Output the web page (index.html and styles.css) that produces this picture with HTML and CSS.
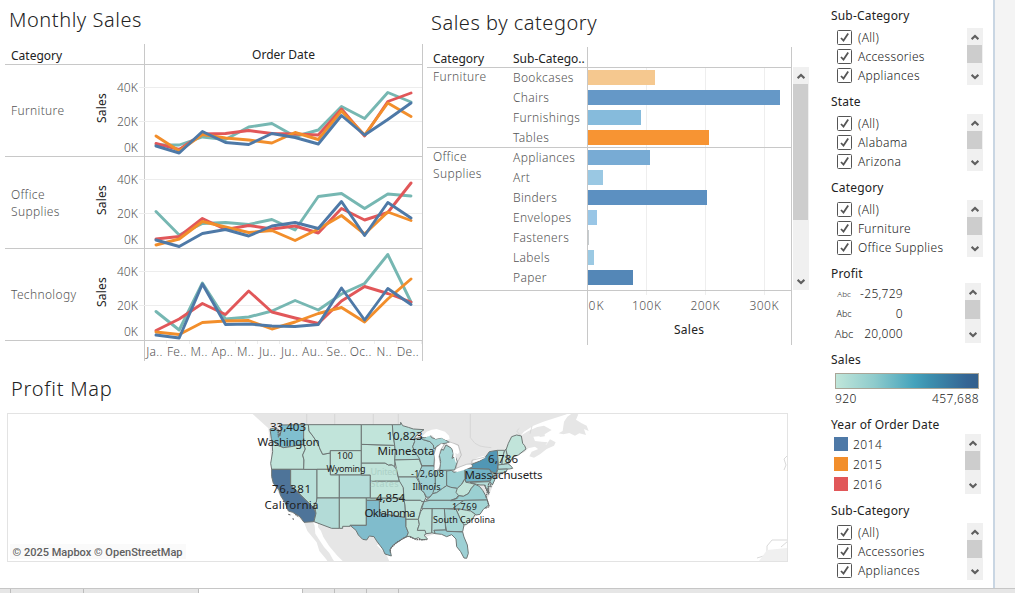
FILE: index.html
```html
<!DOCTYPE html>
<html lang="en">
<head>
<meta charset="utf-8">
<title>Sales dashboard</title>
<link rel="stylesheet" href="styles.css">
</head>
<body>
<svg width="0" height="0" class="defs">
  <symbol id="up" viewBox="0 0 8 6"><path d="M0.6 5.2 L4 1.9 L7.4 5.2" fill="none" stroke="#5f5f5f" stroke-width="2.1"/></symbol>
  <symbol id="down" viewBox="0 0 8 6"><path d="M0.6 0.8 L4 4.1 L7.4 0.8" fill="none" stroke="#5f5f5f" stroke-width="2.1"/></symbol>
  <symbol id="check" viewBox="0 0 15 15"><rect x="0.5" y="0.5" width="14" height="14" rx="1" fill="#fff" stroke="#555"/><path d="M4 8 L6.5 10.6 L11.2 3.6" fill="none" stroke="#555" stroke-width="1.8"/></symbol>
</svg>
<div class="page">
  <div class="workspace">
    <main class="charts">
      <div class="top-row">
        <section class="monthly">
          <h2 class="title">Monthly Sales</h2>
          <div class="table">
            <div class="corner">Category</div>
            <div class="plot-head">Order Date</div>

            <div class="row-head"><span class="name">Furniture</span><span class="axis-title"><b>Sales</b></span><div class="ticks"><span>40K</span><span>20K</span><span>0K</span></div></div>
            <div class="plot"><svg class="lines" viewBox="145 65 277 91">
              <path class="grid" d="M139 87.5H422M139 121.5H422"/>
              <polyline class="y17" points="156,145 179.2,145 202.4,137 225.5,139.5 248.7,127 271.9,123.5 295.1,136.5 318.3,130 341.5,106.5 364.6,118.5 387.8,92.5 411,102"/>
              <polyline class="y16" points="156,143.5 179.2,149.5 202.4,134 225.5,133.5 248.7,130.5 271.9,133.5 295.1,134 318.3,135 341.5,109 364.6,136 387.8,101.5 411,93"/>
              <polyline class="y15" points="156,136 179.2,151 202.4,134.5 225.5,138 248.7,140 271.9,143 295.1,132.5 318.3,139.5 341.5,111 364.6,135 387.8,103 411,116.5"/>
              <polyline class="y14" points="156,146 179.2,153 202.4,131.5 225.5,142.5 248.7,144.5 271.9,133.5 295.1,137.5 318.3,144 341.5,115.5 364.6,135 387.8,119.5 411,103"/>
            </svg></div>

            <div class="row-head"><span class="name">Office<br>Supplies</span><span class="axis-title"><b>Sales</b></span><div class="ticks"><span>40K</span><span>20K</span><span>0K</span></div></div>
            <div class="plot"><svg class="lines" viewBox="145 157 277 91">
              <path class="grid" d="M139 179.5H422M139 213.5H422"/>
              <polyline class="y17" points="156,211.5 179.2,235 202.4,223.5 225.5,222.5 248.7,224.5 271.9,219.5 295.1,230 318.3,196.5 341.5,193.5 364.6,208.5 387.8,194 411,196"/>
              <polyline class="y16" points="156,239 179.2,236.5 202.4,218.5 225.5,229.5 248.7,225.5 271.9,229 295.1,226 318.3,233 341.5,208.5 364.6,220 387.8,212.5 411,183"/>
              <polyline class="y15" points="156,245 179.2,239 202.4,221.5 225.5,227 248.7,232.5 271.9,230.5 295.1,240.5 318.3,229 341.5,215.5 364.6,234 387.8,212 411,220.5"/>
              <polyline class="y14" points="156,240 179.2,246.5 202.4,233.5 225.5,229.5 248.7,236 271.9,226 295.1,222.5 318.3,228.5 341.5,201.5 364.6,235.5 387.8,202.5 411,218"/>
            </svg></div>

            <div class="row-head"><span class="name">Technology</span><span class="axis-title"><b>Sales</b></span><div class="ticks"><span>40K</span><span>20K</span><span>0K</span></div></div>
            <div class="plot"><svg class="lines" viewBox="145 249 277 91">
              <path class="grid" d="M139 271.5H422M139 305.5H422"/>
              <polyline class="y17" points="156,311.5 179.2,330 202.4,283 225.5,319 248.7,317 271.9,311 295.1,300.5 318.3,310 341.5,294 364.6,283.5 387.8,254.5 411,302"/>
              <polyline class="y16" points="156,330.5 179.2,319 202.4,303.5 225.5,314.5 248.7,291 271.9,312 295.1,318 318.3,323.5 341.5,301 364.6,286.5 387.8,293.5 411,302"/>
              <polyline class="y15" points="156,332 179.2,334.5 202.4,322.5 225.5,321 248.7,320.5 271.9,329 295.1,322 318.3,313.5 341.5,307.5 364.6,322 387.8,299 411,279"/>
              <polyline class="y14" points="156,335 179.2,338 202.4,284 225.5,324.5 248.7,324 271.9,326 295.1,326.5 318.3,324.5 341.5,288 364.6,320 387.8,288.5 411,304.5"/>
            </svg></div>

            <div></div>
            <div class="months"><span>Ja..</span><span>Fe..</span><span>M..</span><span>Ap..</span><span>M..</span><span>Ju..</span><span>Ju..</span><span>Au..</span><span>Se..</span><span>Oc..</span><span>N..</span><span>De..</span></div>
          </div>
        </section>

        <section class="bycat">
          <h2 class="title title-cat">Sales by category</h2>
          <div class="bar-area">
            <div class="bar-table">
              <div class="bar-head"><span class="c1">Category</span><span class="c2">Sub-Catego..</span><span class="c3"></span></div>
              <div class="bar-group">
                <div class="c1 group-name">Furniture</div>
                <div class="c2"><p>Bookcases</p><p>Chairs</p><p>Furnishings</p><p>Tables</p></div>
                <div class="c3 bars"><i style="width:67px;background:#f5c88f"></i><i style="width:192px;background:#6598c7"></i><i style="width:53px;background:#86bbdc"></i><i style="width:121px;background:#f79433"></i></div>
              </div>
              <div class="bar-group last">
                <div class="c1 group-name">Office Supplies</div>
                <div class="c2"><p>Appliances</p><p>Art</p><p>Binders</p><p>Envelopes</p><p>Fasteners</p><p>Labels</p><p>Paper</p></div>
                <div class="c3 bars"><i style="width:62px;background:#78abd4"></i><i style="width:15px;background:#9ac8e3"></i><i style="width:119px;background:#5c90c1"></i><i style="width:9px;background:#99c6e6"></i><i style="width:1px;background:#c6cccf"></i><i style="width:6px;background:#9bc9e3"></i><i style="width:45px;background:#5487b7"></i></div>
              </div>
              <div class="bar-axis">
                <div class="axis-box">
                  <svg class="axis-svg" width="203" height="54" viewBox="588 291 203 54">
                    <path d="M646.5 291v4M705.5 291v4M764.5 291v4" stroke="#eee"/>
                    <text x="588.5" y="310" textLength="15">0K</text><text x="632" y="310" textLength="29">100K</text><text x="690.5" y="310" textLength="29">200K</text><text x="749.5" y="310" textLength="29">300K</text>
                    <text class="strong" x="674" y="334" textLength="30">Sales</text>
                  </svg>
                </div>
              </div>
            </div>
            <div class="scroll scroll-main"><svg><use href="#up"/></svg><div class="thumb"></div><svg><use href="#down"/></svg></div>
          </div>
        </section>
      </div>

      <section class="profit-map">
        <h2 class="title title-map">Profit Map</h2>
        <div class="map-frame">
        <svg width="779" height="147" viewBox="8 414 779 147">
          <g transform="translate(250 405) scale(.33333)">
            <g class="land">
              <path d="M0 20 L55 70 L60 120 L65 193 L70 235 L100 290 L130 325 L162 352 L172 378 L200 412 L208 438 L228 462 L236 474 L420 474 L410 450 L380 420 L474 395 L470 395 L500 402 L530 395 L556 386 L605 388 L640 370 L712 300 L712 284 L735 225 L770 200 L790 158 L825 140 L835 130 L855 125 L868 135 L880 128 L893 112 L875 110 L855 108 L850 95 L875 93 L905 75 L882 62 L862 66 L835 78 L812 92 L822 80 L850 62 L880 50 L950 28 L945 20Z"/>
              <path d="M838 154 L845 140 L865 132 L890 118 L900 103 L917 112 L912 122 L890 132 L870 148 L852 158Z"/>
              <path d="M926 85 L938 78 L942 50 L952 35 L968 24 L985 28 L978 44 L995 55 L1010 62 L1016 78 L1002 72 L1008 90 L988 85 L975 92 L958 84 L940 88Z"/>
              <path d="M866 91 L885 88 L884 94 L870 96Z"/>
            </g>
            <path class="province" d="M170 20V59M254 20V59M370 20V59M445 20V59M661 20V98L675 115L690 123L705 126L724 128"/>
            <path class="province" d="M812 92L800 78L808 70M840 86L846 64"/>
            <path d="M188 348 L194 362 L196 386 L210 408 L222 426 L238 444 L248 462 L256 474 L284 474 L262 452 L238 424 L220 396 L213 378 L204 366 L204 350Z" fill="#fff"/>
            <g class="states">
              <path fill="#80bfcf" d="M60 72L70 70L85 78L90 92L94 75L88 60L161 59L161 119L145 120L130 124L100 128L85 122L68 114L64 100Z"/>
              <path d="M66 106L85 122L100 128L130 124L145 120L161 119L166 132L158 150L162 165L161 193L65 193L62 175L68 140Z"/>
              <path fill="#4e7499" d="M65 193H122V240L190 308L198 325L192 350L162 352L150 335L128 322L115 318L105 292L92 272L87 255L70 235L65 215Z"/>
              <path fill="#b9e0d9" d="M122 193H201V279L199 292L193 295L194 311L122 240Z"/>
              <path d="M161 59H175L177 78L190 95L205 118L210 132L218 148L241 144V193H161L162 165L158 150L166 132L161 119Z"/>
              <path d="M175 59H334V137H241V144L218 148L210 132L205 118L190 95L177 78Z"/>
              <path d="M241 137H334V210H241Z"/>
              <path d="M201 193H241V210H268V279H201Z"/>
              <path fill="#b5ddd9" d="M268 210H361V279H268Z"/>
              <path fill="#b3dbd7" d="M201 279H268V370H245L192 350L198 325L193 300L199 292Z"/>
              <path d="M268 279H349V361H300V364H278V370H268Z"/>
              <path fill="#b3dcd7" d="M349 279H461L465 300L467 338L450 335L430 332L405 328L388 322V286H349Z"/>
              <path fill="#80bccc" d="M349 286H388V322L405 328L430 332L450 335L467 338L468 365L475 383L470 395L458 400L450 407L430 420L420 434L424 453L405 447L398 432L380 408L372 395L358 393L350 405L338 403L325 390L318 376L300 361H349Z"/>
              <path d="M361 228H448L455 235L460 248L461 279H361Z"/>
              <path d="M334 174H405L415 180L430 180L440 195L443 210L448 228H361V210H334Z"/>
              <path d="M334 118L434 121L436 140L434 185L425 179L415 180L405 174H334Z"/>
              <path d="M334 59H427L429 85L434 121L334 118Z"/>
              <path fill="#b3dcd7" d="M427 59H452V52L458 62L475 67L490 72L522 74L500 90L492 102L494 110L488 125L495 142L508 155V163L434 165L436 140L434 121L429 85Z"/>
              <path d="M434 165L508 163L512 175L516 185L508 202L503 218L498 216H445L440 195Z"/>
              <path fill="#b9dfd9" d="M445 216H498L512 240L514 256L522 262L528 278L522 290H515L512 286H462L460 248L448 228Z"/>
              <path fill="#c0e3da" d="M462 286H512L515 290H522L516 302L512 315L505 343H468L465 300Z"/>
              <path d="M468 343H505L508 358L502 375H525L529 386L522 391L533 402L515 405L505 398L495 402L480 394L470 395L475 383L468 365Z"/>
              <path fill="#abd6d6" d="M492 102L510 98L520 104L540 110L550 120L552 132L557 128L554 150L552 182H516L512 172L508 160L495 142L488 125L494 110Z"/>
              <path fill="#9fd0d4" d="M516 183H552L556 196V240L551 262L540 276L530 277L522 262L514 256L512 240L503 218L508 202Z"/>
              <path fill="#a5d5d5" d="M556 196H590V242L578 250L560 263L548 266L556 240Z"/>
              <path fill="#9bcfd2" d="M590 198L604 196L612 202L628 197L645 190V220L635 238L622 250L602 247L590 242Z"/>
              <path fill="#a5d5d5" d="M569 196L572 170L568 150L575 132L580 136L588 120L605 130L610 145L606 160L616 155L622 170L614 195Z"/>
              <path fill="#a5d5d5" d="M510 98L524 98L540 89L545 98L558 102L575 98L598 112L585 115L575 116L560 124L552 132L550 120L540 110L520 104Z"/>
              <path fill="#abd8d7" d="M528 285L540 276L548 266L560 263L578 250L590 242L602 247L620 250L630 266L618 280L602 286H540Z"/>
              <path fill="#a9d7d6" d="M522 290L540 286H642L625 298L608 311H515Z"/>
              <path d="M618 262L622 250L635 238L645 222L648 232L660 234L675 238L664 250L655 266L640 274L626 272Z"/>
              <path fill="#9ad0d2" d="M602 287L622 280L626 272L640 274L655 266L664 250L675 238L688 244L698 256L706 270L712 285Z"/>
              <path fill="#a4d5d5" d="M642 286L712 285L716 300L700 313L690 328L678 330L662 318L650 316L628 312L608 311L625 298Z"/>
              <path d="M618 313L628 312L650 316L662 318L676 328L665 345L650 358L640 360L630 340Z"/>
              <path fill="#a8d6d5" d="M583 311L618 313L630 340L642 360L638 380L590 379L586 358Z"/>
              <path fill="#b5ddd9" d="M546 311H583L587 375L552 376L556 386L545 383Z"/>
              <path fill="#c0e3da" d="M519 311H546L545 384L528 386L525 376H502L508 358L505 343L512 320Z"/>
              <path fill="#9dd0d4" d="M552 376L587 375L590 379L638 381L642 396L652 420L655 445L650 460L642 459L632 440L620 425L618 402L605 389L590 395L575 388L556 386Z"/>
              <path fill="#6fb2c5" d="M645 192L652 190L718 192L724 204L728 212L720 228L647 231Z"/>
              <path fill="#5197b5" d="M652 190L668 185L665 178L690 168L705 158L718 140L742 136L745 165L742 192L738 205L725 201L718 192Z"/>
              <path fill="#a4d5d5" d="M724 200L736 205L734 225L727 240L720 230L728 212Z"/>
              <path fill="#b5ddd9" d="M660 232L718 230L724 246L716 243V268L710 255L704 240L690 240L680 238Z"/>
              <path d="M742 136H764L757 160L756 180H745Z"/>
              <path d="M764 136L768 133L774 158L778 173L756 180L757 160Z"/>
              <path d="M778 173L768 135L775 115L785 95L800 90L814 93L818 115L824 122L828 132L805 150L790 155Z"/>
              <path fill="#b5ddd9" d="M744 180L774 176L784 184L788 190L778 192L744 193Z"/>
              <path fill="#b5ddd9" d="M743 193L772 192L768 201L740 206Z"/>
            </g>
            <path d="M516 95L530 80L545 74L560 72L585 80L597 92L599 102L588 106L574 98L556 102L546 90L530 96Z" fill="#fff"/>
            <path d="M552 196L554 165L552 148L558 128L574 115L583 118L572 135L567 155L571 176L568 190L560 197Z" fill="#fff" stroke="#777" stroke-width="1.5"/>
            <path d="M590 114L606 112L624 124L628 140L624 148L616 144L620 174L617 172L612 155L608 132Z" fill="#fff"/>
            <path d="M612 198L625 188L652 178L665 180L665 185L640 196L622 201Z" fill="#fff"/>
            <path d="M666 168L682 158L702 152L706 158L690 166L672 172Z" fill="#fff"/>
            <path d="M597 110L625 120L634 150L622 172L618 190L650 178L665 176L666 166L690 160L705 156" fill="none" stroke="#999" stroke-width="1.5"/>
            <path d="M78 68L92 82L85 97L84 76M704 240L712 260L708 278M716 235L713 254L718 264M712 286L718 305L705 310M470 395L440 412L422 430L420 442M480 396L500 404L530 404M115 328L123 330M128 340L131 344M136 328L143 334" fill="none" stroke="#686868" stroke-width="3.5" stroke-dasharray="5 2"/>
          </g>
          <path d="M787 456L784 459L786 465L784 470M787 540H772L767 546V555L757 558M781 547L788 541M764 555H782" fill="none" stroke="#d9d9d9"/>
          <path d="M787 548L767 550L759 561H787Z" fill="#f0f0f0"/>
          <g class="country"><text x="370.500" y="475" textLength="27">United</text><text x="370.500" y="487" textLength="28">States</text></g>
          <g class="labels">
            <text x="270" y="431" textLength="36">33,403</text><text x="257.500" y="446" textLength="62">Washington</text>
            <text x="272" y="493" textLength="39">76,381</text><text x="264.500" y="509" textLength="54">California</text>
            <text x="386.500" y="439.500" textLength="36">10,823</text><text x="377.500" y="454.500" textLength="57">Minnesota</text>
            <text x="376" y="502" textLength="29">4,854</text><text x="364.500" y="517" textLength="51">Oklahoma</text>
            <text x="488" y="463" textLength="30">6,786</text><text x="464.500" y="478.500" textLength="78">Massachusetts</text>
          </g>
          <g class="labels small">
            <text x="337" y="459" textLength="16">100</text><text x="326.500" y="472" textLength="39">Wyoming</text>
            <text x="411" y="477" textLength="33">-12,608</text><text x="412.500" y="490" textLength="28">Illinois</text>
            <text x="452" y="510" textLength="25">1,769</text><text x="433" y="523" textLength="62">South Carolina</text>
          </g>
          <rect x="10" y="544" width="176" height="15" fill="#fafafa"/>
          <text class="credit" x="12.500" y="556" textLength="170">© 2025 Mapbox © OpenStreetMap</text>
        </svg>
        </div>
      </section>
    </main>

    <aside class="filters">
      <section class="filter"><h3>Sub-Category</h3><div class="filter-body"><ul class="options"><li><svg><use href="#check"/></svg>(All)</li><li><svg><use href="#check"/></svg>Accessories</li><li><svg><use href="#check"/></svg>Appliances</li></ul><div class="scroll"><svg><use href="#up"/></svg><div class="thumb"></div><svg><use href="#down"/></svg></div></div></section>
      <section class="filter"><h3>State</h3><div class="filter-body"><ul class="options"><li><svg><use href="#check"/></svg>(All)</li><li><svg><use href="#check"/></svg>Alabama</li><li><svg><use href="#check"/></svg>Arizona</li></ul><div class="scroll"><svg><use href="#up"/></svg><div class="thumb"></div><svg><use href="#down"/></svg></div></div></section>
      <section class="filter"><h3>Category</h3><div class="filter-body"><ul class="options"><li><svg><use href="#check"/></svg>(All)</li><li><svg><use href="#check"/></svg>Furniture</li><li><svg><use href="#check"/></svg>Office Supplies</li></ul><div class="scroll"><svg><use href="#up"/></svg><div class="thumb"></div><svg><use href="#down"/></svg></div></div></section>
      <section class="filter legend"><h3>Profit</h3><div class="filter-body"><ul class="sizes"><li><small class="s1">Abc</small><span>-25,729</span></li><li><small class="s2">Abc</small><span>0</span></li><li><small class="s3">Abc</small><span>20,000</span></li></ul><div class="scroll tall"><svg><use href="#up"/></svg><div class="thumb"></div><svg><use href="#down"/></svg></div></div></section>
      <section class="filter ramp-card"><h3>Sales</h3><div class="ramp"></div><div class="ramp-ends"><span>920</span><span>457,688</span></div></section>
      <section class="filter legend"><h3>Year of Order Date</h3><div class="filter-body"><ul class="years"><li><i class="k14"></i>2014</li><li><i class="k15"></i>2015</li><li><i class="k16"></i>2016</li></ul><div class="scroll tall"><svg><use href="#up"/></svg><div class="thumb"></div><svg><use href="#down"/></svg></div></div></section>
      <section class="filter"><h3>Sub-Category</h3><div class="filter-body"><ul class="options"><li><svg><use href="#check"/></svg>(All)</li><li><svg><use href="#check"/></svg>Accessories</li><li><svg><use href="#check"/></svg>Appliances</li></ul><div class="scroll"><svg><use href="#up"/></svg><div class="thumb"></div><svg><use href="#down"/></svg></div></div></section>
    </aside>
    <div class="gutter"></div>
  </div>
  <footer class="tabs"><span class="t0"></span><span class="t1"></span><span class="t2"></span><span class="t3"></span><span class="t4"></span><span class="t4"></span><span class="t4"></span></footer>
</div>
</body>
</html>
```
FILE: styles.css
```css
* { box-sizing: border-box; }
body { margin: 0; overflow: hidden; background: #fff; color: #222; font: 12px "Noto Sans", "Open Sans", sans-serif; }
h2, h3, ul { margin: 0; padding: 0; font-weight: 400; }
p { margin: 0; }
ul { list-style: none; }
svg { display: block; }
.defs { position: absolute; }
.page { display: flex; flex-direction: column; width: 1015px; height: 593px; }
.workspace { display: flex; height: 588px; }
.charts { width: 825px; }
.top-row { display: flex; height: 370px; }
.title { font-size: 20px; font-weight: 300; line-height: 28px; color: #222; white-space: nowrap; letter-spacing: .55px; }

/* Monthly line charts */
.monthly { width: 427px; padding: 6px 0 0 5px; }
.monthly .title { height: 38px; padding-left: 4px; }
.table { display: grid; grid-template-columns: 139px 279px; grid-template-rows: 21px 92px 92px 92px 20px; }
.corner, .row-head, .plot-head, .plot { border-bottom: 1px solid #c8c8c8; }
.corner { padding-left: 6px; line-height: 23px; }
.plot-head, .plot, .months { border-left: 1px solid #c8c8c8; border-right: 1px solid #c8c8c8; }
.plot-head { line-height: 22px; text-align: center; }
.row-head { display: flex; align-items: center; }
.name { width: 84px; padding-left: 6px; line-height: 17px; font-weight: 300; letter-spacing: .35px; color: #555; }
.axis-title { display: flex; align-items: center; justify-content: center; width: 24px; height: 88px; }
.axis-title b { font-weight: 400; color: #222; transform: rotate(-90deg); letter-spacing: .2px; padding-left: 5px; flex: none; }
.ticks { display: flex; flex-direction: column; align-self: flex-start; width: 25px; padding-top: 13px; text-align: right; font-weight: 300; color: #555; }
.ticks span { height: 18px; line-height: 19px; margin-bottom: 16px; letter-spacing: .1px; }
.ticks span + span { margin-bottom: 8px; }
.lines { width: 277px; height: 91px; overflow: visible; }
.grid { stroke: #ededed; stroke-width: 1; }
polyline { fill: none; stroke-width: 2.9; stroke-linecap: round; stroke-linejoin: round; }
.y14 { stroke: #4e79a7; }
.y15 { stroke: #f28e2b; }
.y16 { stroke: #e15759; }
.y17 { stroke: #76b7b2; }
.months { display: grid; grid-template-columns: repeat(12, 1fr); font-weight: 300; line-height: 22px; color: #555; letter-spacing: .3px; white-space: nowrap; }
.months span { display: flex; justify-content: center; padding-right: 3px; background: linear-gradient(#eee, #eee) right top / 1px 3px no-repeat; }

/* Bars by category */
.bycat { width: 398px; padding-top: 9px; }
.title-cat { height: 38px; padding-left: 4px; letter-spacing: .52px; }
.bar-area { display: flex; }
.bar-table { width: 365px; border-right: 1px solid #c8c8c8; }
.bar-head { display: flex; height: 21px; border-bottom: 1px solid #c8c8c8; line-height: 24px; }
.c1 { width: 80px; padding-left: 6px; flex: none; }
.c2 { width: 80px; padding-left: 6px; flex: none; white-space: nowrap; }
.c3 { flex: 1; border-left: 1px solid #c8c8c8; }
.bar-group { display: flex; border-bottom: 1px solid #c8c8c8; height: 80px; font-weight: 300; color: #555; letter-spacing: .35px; }
.bar-group.last { height: 143px; }
.group-name { line-height: 17px; }
.bar-group p { height: 20px; line-height: 20px; }
.bars { display: flex; flex-direction: column; gap: 5px; padding-top: 2px; background: linear-gradient(#eee, #eee) 58px 0 / 1px 100% no-repeat, linear-gradient(#eee, #eee) 117px 0 / 1px 100% no-repeat, linear-gradient(#eee, #eee) 176px 0 / 1px 100% no-repeat; }
.bars i { display: block; height: 15px; }
.bar-axis { padding-left: 160px; }
.axis-box { border-left: 1px solid #c8c8c8; }
.axis-svg text { font-size: 12px; font-weight: 300; fill: #555; }
.axis-svg .strong { font-weight: 400; fill: #222; }

.scroll { display: flex; flex-direction: column; width: 16px; height: 57px; background: #f0f0f0; }
.scroll svg { width: 8px; height: 6px; margin: 6px 0 5px 3.5px; flex: none; }
.scroll .thumb { width: 15px; height: 18px; background: #cdcdcd; }
.scroll svg:last-child { margin: auto 0 5px 3.5px; }
.scroll.tall { height: 60px; }
.scroll.tall .thumb { height: 19px; }
.scroll-main { height: 223px; margin: 20px 0 0 1px; }
.scroll-main .thumb { height: 136px; }

/* Map */
.profit-map { padding: 5px 0 0 7px; }
.title-map { height: 38px; padding-left: 4px; letter-spacing: .75px; }
.map-frame { width: 781px; height: 149px; border: 1px solid #e3e3e3; }
.land { fill: #e6e6e6; }
.province { fill: none; stroke: #cfcfcf; stroke-width: 2; }
.states { fill: #c1e4da; stroke: #6d7574; stroke-width: 3; stroke-linejoin: round; }
.country text { font-size: 9px; fill: #acd0c6; }
.labels text { font-size: 11.5px; fill: #222; }
.labels.small text { font-size: 9px; }
.credit { font: 500 11px Roboto, sans-serif; fill: #606060; }

/* Filters and legends */
.filters { width: 168px; padding: 7px 0 0 6px; }
.filter { height: 86px; }
.filter h3 { height: 21px; line-height: 18px; font-size: 12px; letter-spacing: .18px; }
.filter-body { display: flex; justify-content: space-between; padding-right: 10px; }
.options { padding-left: 6px; }
.options li { display: flex; align-items: center; gap: 6px; height: 19px; font-weight: 300; letter-spacing: .3px; color: #222; }
.options svg { width: 15px; height: 15px; }
.legend .filter-body { padding-right: 12px; margin-top: -3px; }
.sizes { font-weight: 300; padding: 0 0 0 3px; letter-spacing: .3px; color: #222; }
.sizes li { display: flex; align-items: center; height: 20px; }
.sizes small { width: 20px; text-align: center; letter-spacing: 0; }
.s1 { font-size: 8px; } .s2 { font-size: 9px; } .s3 { font-size: 11px; }
.sizes span { width: 49px; text-align: right; }
.ramp-card { height: 65px; }
.ramp-card h3 { height: 22px; }
.ramp { width: 144px; height: 16px; margin-left: 4px; border: 1px solid #a9a597; background: linear-gradient(90deg, #c0e6da, #8ecbcc 27%, #45a3bc 55%, #3c8fae 66%, #346594 92%, #34608c); }
.ramp-ends { display: flex; justify-content: space-between; width: 144px; margin-left: 4px; line-height: 19px; font-weight: 300; letter-spacing: .45px; }
.years { padding: 0 0 0 3px; font-weight: 300; color: #222; letter-spacing: .45px; }
.years li { display: flex; align-items: center; gap: 5px; height: 20px; }
.years i { width: 14px; height: 14px; }
.k14 { background: #4e79a7; } .k15 { background: #f28e2b; } .k16 { background: #e15759; }
.gutter { flex: 1; border-left: 2px solid #c9d6e3; background: #f4f4f4; }

.tabs { display: flex; height: 5px; border-top: 1px solid #c6c6c6; background: #e6e6e6; }
.tabs span { border-right: 1px solid #bdbdbd; }
.t0 { width: 11px; } .t1 { width: 73px; } .t2 { width: 115px; } .t3 { width: 104px; background: #fff; } .t4 { width: 32px; }
```
